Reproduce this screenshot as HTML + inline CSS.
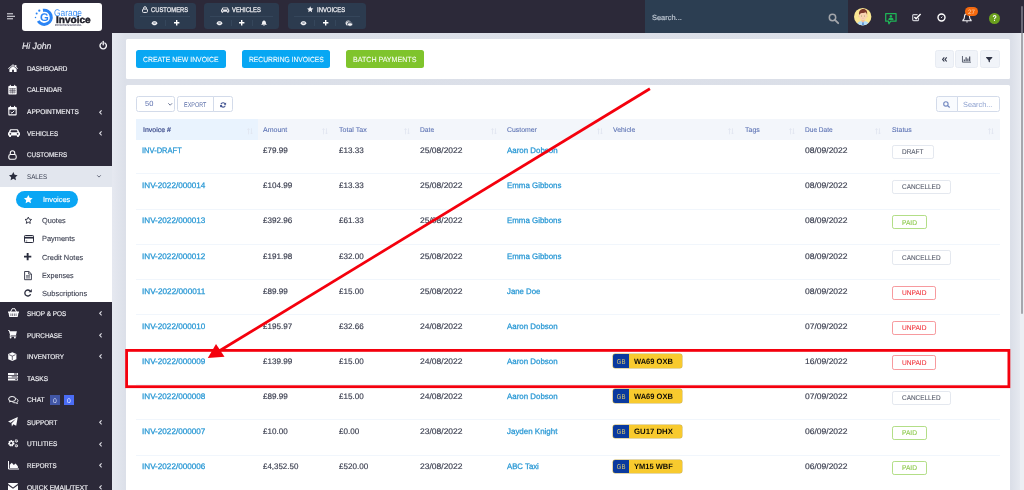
<!DOCTYPE html>
<html lang="en">
<head>
<meta charset="utf-8">
<title>Invoices - Garage Invoice</title>
<style>
*{box-sizing:border-box;margin:0;padding:0}
html,body{width:1024px;height:490px;overflow:hidden}
body{position:relative;background:linear-gradient(to right,#e5e8f0 113px,#dce0e9 125px,#dbdfe8 1011px,#e6e9f0 1020px);--pg:#e2e6ee;font-family:"Liberation Sans",sans-serif;color:#3a3f51;font-size:8px}
.abs{position:absolute}
.t{position:absolute;white-space:nowrap;line-height:12px;height:12px;text-rendering:geometricPrecision}
svg{overflow:visible}
#app{position:absolute;left:0;top:0;width:1024px;height:490px;will-change:transform}
</style>
</head>
<body>
<div id="app">
<div class="abs" style="left:0px;top:0px;width:1024px;height:32.7px;background:#2c2939;"></div>
<svg class="abs" style="left:7px;top:13px" width="8" height="7" viewBox="0 0 8 7"><path d="M0 .8h6M0 3.300h8M0 5.800h6" stroke="#e9e9ee" stroke-width="1"/></svg>
<div class="abs" style="left:22px;top:2.6px;width:80.3px;height:28.4px;background:#fff;border-radius:3px"></div>
<svg class="abs" style="left:35px;top:7px" width="19" height="20" viewBox="0 0 19 20"><path d="M7.98 3.36A7.05 7.05 0 1 1 3.22 14.04" fill="none" stroke="#2a84f5" stroke-width="3.100"/><circle cx="4.300" cy="3.700" r="1.150" fill="#2a84f5"/><circle cx="1.650" cy="6.500" r="1" fill="#2a84f5"/><circle cx=".5" cy="10.400" r=".75" fill="#2a84f5"/></svg>
<div class="t" style="left:39.72px;top:10px;line-height:17px;height:17px;font-size:11.00px;color:#2a84f5;transform:scaleX(1.029);transform-origin:50% 50%;font-weight:bold;">G</div>
<div class="t" style="left:53.80px;top:6px;line-height:16px;height:16px;font-size:9.60px;color:#3b8ff5;transform:scaleX(0.874);transform-origin:0 50%;">Garage</div>
<div class="t" style="left:55.90px;top:13px;line-height:16px;height:16px;font-size:9.80px;color:#1d1d28;transform:scaleX(1.025);transform-origin:0 50%;font-weight:bold;-webkit-text-stroke:0.45px #1d1d28;">Invoice</div>
<div class="t" style="left:54.60px;top:22px;line-height:7px;height:7px;font-size:2.70px;color:#66667a;transform:scaleX(1.285);transform-origin:0 50%;-webkit-text-stroke:0.1px #66667a;">PROFESSIONAL</div>
<div class="abs" style="left:134.3px;top:3.1px;width:61.3px;height:26px;background:#2c3b4f;border-radius:3.500px"></div>
<div class="abs" style="left:203.9px;top:3.1px;width:75.3px;height:26px;background:#2c3b4f;border-radius:3.500px"></div>
<div class="abs" style="left:287.5px;top:3.1px;width:78px;height:26px;background:#2c3b4f;border-radius:3.500px"></div>
<div class="abs" style="left:140.3px;top:16px;width:49.7px;height:0.8px;background:#35465b;"></div>
<div class="abs" style="left:210px;top:16px;width:63px;height:0.8px;background:#35465b;"></div>
<div class="abs" style="left:293.5px;top:16px;width:66.3px;height:0.8px;background:#35465b;"></div>
<div class="abs" style="left:164.8px;top:20.2px;width:0.8px;height:5.4px;background:#35465b;"></div>
<div class="abs" style="left:230.5px;top:20.2px;width:0.8px;height:5.4px;background:#35465b;"></div>
<div class="abs" style="left:251.5px;top:20.2px;width:0.8px;height:5.4px;background:#35465b;"></div>
<div class="abs" style="left:313.9px;top:20.2px;width:0.8px;height:5.4px;background:#35465b;"></div>
<div class="abs" style="left:335.2px;top:20.2px;width:0.8px;height:5.4px;background:#35465b;"></div>
<div class="t" style="left:150.70px;top:5px;line-height:12px;height:12px;font-size:6.80px;color:#ececf0;transform:scaleX(0.859);transform-origin:0 50%;-webkit-text-stroke:0.25px #ececf0;">CUSTOMERS</div>
<div class="t" style="left:232.30px;top:5px;line-height:12px;height:12px;font-size:6.80px;color:#ececf0;transform:scaleX(0.859);transform-origin:0 50%;-webkit-text-stroke:0.25px #ececf0;">VEHICLES</div>
<div class="t" style="left:317.00px;top:5px;line-height:12px;height:12px;font-size:6.80px;color:#ececf0;transform:scaleX(0.868);transform-origin:0 50%;-webkit-text-stroke:0.25px #ececf0;">INVOICES</div>
<svg class="abs" style="left:141.7px;top:5.9px" width="6" height="7" viewBox="0 0 6 7"><rect x=".55" y="3.100" width="4.900" height="3.350" rx=".9" fill="none" stroke="#ececf0" stroke-width="1"/><path d="M1.600 3.100V2.100a1.400 1.400 0 0 1 2.800 0v1" fill="none" stroke="#ececf0" stroke-width="1"/></svg>
<svg class="abs" style="left:221.3px;top:6.7px" width="8.3" height="6.64" viewBox="-0.5 0 12 8.600"><path d="M2.200.2h6.600c.5 0 .8.300 1 .7l.8 2.200c.5.200.9.600.9 1.200v2.200h-1v.8c0 .4-.3.700-.7.700h-.7c-.4 0-.7-.3-.7-.7v-.8H2.600v.8c0 .4-.3.700-.7.700h-.7c-.4 0-.7-.3-.7-.7v-.8h-1V4.300c0-.6.400-1 .9-1.200l.8-2.200c.2-.4.500-.7 1-.7z" fill="#ececf0"/><path d="M2.600 1.300L1.900 3.200h7.200L8.400 1.300z" fill="#2c3b4f"/><circle cx="1.900" cy="4.800" r=".8" fill="#2c3b4f"/><circle cx="9.100" cy="4.800" r=".8" fill="#2c3b4f"/></svg>
<svg class="abs" style="left:307.3px;top:6.4px" width="6.4" height="6.4" viewBox="0 0 10 10"><path d="M5 .2l1.500 3.150 3.400.450-2.500 2.400.65 3.450L5 7.950 1.950 9.650l.65-3.450L.1 3.800l3.400-.450z" fill="#ececf0"/></svg>
<svg class="abs" style="left:150.75px;top:20.9px" width="7" height="4.2" viewBox="0 0 14 9.600"><path d="M0 5C2 1.500 4.500 0 7 0s5 1.500 7 5c-2 3.300-4.500 4.600-7 4.600S2 8.300 0 5z" fill="#f2f2f5"/><circle cx="7" cy="4.300" r="2.300" fill="#5a6678"/><circle cx="7" cy="4.300" r="1.200" fill="#f2f2f5"/></svg>
<svg class="abs" style="left:216.0px;top:20.9px" width="7" height="4.2" viewBox="0 0 14 9.600"><path d="M0 5C2 1.500 4.500 0 7 0s5 1.500 7 5c-2 3.300-4.500 4.600-7 4.600S2 8.300 0 5z" fill="#f2f2f5"/><circle cx="7" cy="4.300" r="2.300" fill="#5a6678"/><circle cx="7" cy="4.300" r="1.200" fill="#f2f2f5"/></svg>
<svg class="abs" style="left:300.0px;top:20.9px" width="7" height="4.2" viewBox="0 0 14 9.600"><path d="M0 5C2 1.500 4.500 0 7 0s5 1.500 7 5c-2 3.300-4.500 4.600-7 4.600S2 8.300 0 5z" fill="#f2f2f5"/><circle cx="7" cy="4.300" r="2.300" fill="#5a6678"/><circle cx="7" cy="4.300" r="1.200" fill="#f2f2f5"/></svg>
<svg class="abs" style="left:173.85000000000002px;top:20.2px" width="5.4" height="5.4" viewBox="0 0 5.4 5.4"><path d="M2.7 0v5.4M0 2.7h5.4" stroke="#fff" stroke-width="1.4"/></svg>
<svg class="abs" style="left:239.05px;top:20.2px" width="5.4" height="5.4" viewBox="0 0 5.4 5.4"><path d="M2.7 0v5.4M0 2.7h5.4" stroke="#fff" stroke-width="1.4"/></svg>
<svg class="abs" style="left:322.90000000000003px;top:20.2px" width="5.4" height="5.4" viewBox="0 0 5.4 5.4"><path d="M2.7 0v5.4M0 2.7h5.4" stroke="#fff" stroke-width="1.4"/></svg>
<svg class="abs" style="left:261px;top:20px" width="6" height="6" viewBox="0 0 14 14"><path d="M7 .3c.7 0 1.100.5 1.100 1.100v.3c2.100.5 3.300 2.300 3.300 4.400 0 2.400.8 3.400 1.900 4.300v.8H.7v-.8c1.100-.9 1.900-1.900 1.900-4.300 0-2.100 1.200-3.900 3.300-4.400v-.3C5.900.8 6.300.3 7 .3zM5.300 12.200h3.400a1.700 1.700 0 0 1-3.400 0z" fill="#f2f2f5"/></svg>
<svg class="abs" style="left:344.7px;top:20px" width="8" height="6" viewBox="0 0 8 6"><path d="M.6 2.500a2.600 1.900 0 0 1 5.200 0v1.200a2.600 1.900 0 0 1-5.200 0z" fill="#f2f2f5"/><path d="M2.400 3.800a2.600 1.700 0 0 1 5.200 0v.8a2.600 1.700 0 0 1-5.200 0z" fill="#f2f2f5" stroke="#2c3b4f" stroke-width=".7"/><path d="M1 2.600a2.200 1.300 0 0 1 4.400 0" fill="none" stroke="#2c3b4f" stroke-width=".5"/><path d="M3 4a2 1.100 0 0 1 4 0" fill="none" stroke="#2c3b4f" stroke-width=".5"/></svg>
<div class="abs" style="left:645px;top:0px;width:203px;height:32.7px;background:#2c3e52;"></div>
<div class="t" style="left:651.90px;top:11px;line-height:13px;height:13px;font-size:7.43px;color:#bcc5d0;transform:scaleX(1.002);transform-origin:0 50%;-webkit-text-stroke:0.2px #bcc5d0;">Search...</div>
<svg class="abs" style="left:828px;top:12.5px" width="12" height="12" viewBox="0 0 12 12"><circle cx="4.500" cy="4.500" r="3.200" fill="none" stroke="#a4a6ab" stroke-width="1.500"/><path d="M6.900 6.900l3.300 3.300" stroke="#a4a6ab" stroke-width="1.800" stroke-linecap="round"/></svg>
<svg class="abs" style="left:854.3px;top:7.7px" width="17.4" height="17.4" viewBox="0 0 18 18"><defs><clipPath id="av"><circle cx="9" cy="9" r="9"/></clipPath></defs><circle cx="9" cy="9" r="9" fill="#fbe793"/><g clip-path="url(#av)"><path d="M2.800 18.500c0-3.300 2.300-5 6.500-5s6.500 1.700 6.500 5z" fill="#b3dcf7"/><path d="M7.700 11.500h3.200v2.300L9.300 15.300 7.700 13.800z" fill="#f0bd96"/><ellipse cx="5.300" cy="8.500" rx=".8" ry="1.100" fill="#f3c4a0"/><ellipse cx="13.300" cy="8.500" rx=".8" ry="1.100" fill="#f3c4a0"/><ellipse cx="9.300" cy="8.100" rx="3.900" ry="4.500" fill="#f9d2b2"/><path d="M5.300 7.600C4.600 3.600 6.500 1.100 9.600 1.100c3 0 4.700 2.200 3.900 6.200-.3-1.400-.8-2.300-1.500-2.800-1.500 1-3.700.7-5.300 1.100-.8.300-1.200 1-1.400 2z" fill="#7c3a2c"/><circle cx="7.700" cy="8.300" r=".5" fill="#6b8f3a"/><circle cx="10.900" cy="8.300" r=".5" fill="#6b8f3a"/><path d="M8.800 10.700h1" stroke="#d9957a" stroke-width=".4"/><path d="M8.800 14.800h1l.4 3.500H8.400z" fill="#3f78c8"/></g></svg>
<svg class="abs" style="left:885.3px;top:12.9px" width="11.8" height="11.8" viewBox="0 0 11.8 11.8"><path d="M.7.750h10.350v7.500H5.600L3.900 10.800 3.500 8.250H.7z" fill="none" stroke="#1fb457" stroke-width="1.250" stroke-linejoin="round"/><circle cx="5.900" cy="3.200" r="1.200" fill="#1fb457"/><path d="M3.300 6.900c0-1.700 1.100-2.400 2.600-2.400s2.600.7 2.600 2.400z" fill="#1fb457"/></svg>
<svg class="abs" style="left:912.2px;top:12.8px" width="9.5" height="8.5" viewBox="0 0 9.5 8.5"><path d="M6.500 4.700v2.100c0 .5-.4.900-.9.900H1.600c-.5 0-.9-.4-.9-.9V2.500c0-.5.400-.9.900-.9h4" fill="none" stroke="#c9c9d0" stroke-width="1.200"/><path d="M2.400 4l1.700 1.700L8.600 1.100" fill="none" stroke="#fff" stroke-width="1.500"/></svg>
<svg class="abs" style="left:937.3px;top:13.2px" width="9" height="9" viewBox="0 0 9 9"><circle cx="4.500" cy="4.500" r="3.500" fill="none" stroke="#fff" stroke-width="1.400"/><path d="M4.100 5l1.200-1.400" stroke="#e0e0e6" stroke-width="1"/></svg>
<svg class="abs" style="left:961.5px;top:13.3px" width="10" height="10" viewBox="0 0 10 10"><path d="M5 .7c1.600 0 2.500 1.200 2.500 2.900 0 2 .6 2.900 1.600 3.700v.5H.9v-.5c1-.8 1.600-1.700 1.600-3.700C2.500 1.900 3.400.7 5 .7z" fill="none" stroke="#f4f4f7" stroke-width="1.100"/><path d="M4 8.600a1 1 0 0 0 2 0z" fill="#f4f4f7"/></svg>
<div class="abs" style="left:965.4px;top:7.1px;width:12.9px;height:8.9px;background:#f5690f;border-radius:4.500px"></div>
<div class="t" style="left:968.35px;top:7px;line-height:12px;height:12px;font-size:6.30px;color:#ffd6b0;transform:scaleX(1.011);transform-origin:50% 50%;">27</div>
<div class="abs" style="left:989.1px;top:12.5px;width:11px;height:11px;background:#6a9f1e;border-radius:50%"></div>
<div class="t" style="left:992.00px;top:11px;line-height:14px;height:14px;font-size:8.50px;color:#fff;transform:scaleX(0.815);transform-origin:50% 50%;font-weight:bold;">?</div>
<div class="abs" style="left:0px;top:32.7px;width:111.7px;height:460px;background:#2c2939;"></div>
<div class="t" style="left:22.00px;top:39px;line-height:14px;height:14px;font-size:9.00px;color:#ececf0;transform:scaleX(0.963);transform-origin:0 50%;font-style:italic;-webkit-text-stroke:0.15px #ececf0;">Hi John</div>
<svg class="abs" style="left:98.7px;top:41.4px" width="8.4" height="8.4" viewBox="0 0 8.4 8.4"><path d="M2.500 2a3.200 3.200 0 1 0 3.400 0" fill="none" stroke="#f4f4f7" stroke-width="1.400" stroke-linecap="round"/><path d="M4.200.4v3.400" stroke="#f4f4f7" stroke-width="1.400" stroke-linecap="round"/></svg>
<div class="abs" style="left:0px;top:166px;width:111.7px;height:21px;background:#e2e6ee;"></div>
<div class="abs" style="left:0px;top:186.9px;width:111.7px;height:115.1px;background:#fff;"></div>
<div class="abs" style="left:15.9px;top:191px;width:62.2px;height:16.5px;background:#0aa6f4;border-radius:8.500px"></div>
<svg class="abs" style="left:7.5px;top:63.7px" width="10" height="8" viewBox="0 0 10 8"><path d="M5 .2L0 4.400l.5.600L5 1.300l4.500 3.700.5-.6-1.600-1.400V.9H7.100v1z" fill="#fbfbfd"/><path d="M5 2L1.400 5v2.700c0 .2.100.3.300.3h2.400V5.700h1.800V8h2.400c.2 0 .3-.1.300-.3V5z" fill="#fbfbfd"/></svg>
<div class="t" style="left:26.90px;top:64px;line-height:12px;height:12px;font-size:6.86px;color:#f1f1f5;transform:scaleX(0.928);transform-origin:0 50%;-webkit-text-stroke:0.15px #f1f1f5;">DASHBOARD</div>
<svg class="abs" style="left:8.0px;top:85.1px" width="9" height="9.5" viewBox="0 0 9 9.5"><path d="M.3 1.800c0-.4.300-.7.700-.7h7c.4 0 .7.300.7.700v6.900c0 .4-.3.700-.7.700H1c-.4 0-.7-.3-.7-.7z" fill="#fbfbfd"/><path d="M2.300.2v1.900M6.700.2v1.900" stroke="#fbfbfd" stroke-width="1.100" stroke-linecap="round"/><path d="M1.100 3.700h6.800M1.100 5.400h6.800M1.100 7.100h6.800M2.900 3.200v5.400M4.500 3.200v5.400M6.100 3.200v5.400" stroke="#2c2939" stroke-width=".5"/></svg>
<div class="t" style="left:26.90px;top:85px;line-height:12px;height:12px;font-size:6.86px;color:#f1f1f5;transform:scaleX(0.930);transform-origin:0 50%;-webkit-text-stroke:0.15px #f1f1f5;">CALENDAR</div>
<svg class="abs" style="left:8.4px;top:106.35px" width="9" height="9.5" viewBox="0 0 9 9.5"><path d="M.85 2c0-.2.150-.350.350-.350h6.600c.2 0 .350.150.350.350v6.500c0 .2-.150.350-.350.350H1.200c-.2 0-.350-.150-.350-.350z" fill="none" stroke="#fbfbfd" stroke-width="1.100"/><path d="M.5 1.600h8v2h-8z" fill="#fbfbfd"/><path d="M2.400.2v1.900M6.600.2v1.900" stroke="#fbfbfd" stroke-width="1.100" stroke-linecap="round"/><path d="M2.700 6l1.200 1.200 2.400-2.500" fill="none" stroke="#fbfbfd" stroke-width="1"/></svg>
<div class="t" style="left:26.90px;top:107px;line-height:12px;height:12px;font-size:6.86px;color:#f1f1f5;transform:scaleX(0.958);transform-origin:0 50%;-webkit-text-stroke:0.15px #f1f1f5;">APPOINTMENTS</div>
<svg class="abs" style="left:98.6px;top:109.5px" width="3" height="4.6" viewBox="0 0 3 4.6"><path d="M2.600.3L.7 2.300l1.900 2" fill="none" stroke="#dcdce3" stroke-width="1.100"/></svg>
<svg class="abs" style="left:7.85px;top:129.35px" width="11.5" height="8.5" viewBox="0 0 11.5 8.5"><path d="M2.200.2h6.600c.5 0 .8.300 1 .7l.8 2.200c.5.200.9.600.9 1.200v2.200h-1v.8c0 .4-.3.700-.7.700h-.7c-.4 0-.7-.3-.7-.7v-.8H2.600v.8c0 .4-.3.700-.7.700h-.7c-.4 0-.7-.3-.7-.7v-.8h-1V4.300c0-.6.400-1 .9-1.200l.8-2.200c.2-.4.500-.7 1-.7z" fill="#fbfbfd" transform="translate(.5 0)"/><path d="M3.100 1.300L2.400 3.200h7.200L8.900 1.300z" fill="#2c2939"/><circle cx="2.400" cy="4.800" r=".85" fill="#2c2939"/><circle cx="9.600" cy="4.800" r=".85" fill="#2c2939"/></svg>
<div class="t" style="left:26.90px;top:129px;line-height:12px;height:12px;font-size:6.86px;color:#f1f1f5;transform:scaleX(0.923);transform-origin:0 50%;-webkit-text-stroke:0.15px #f1f1f5;">VEHICLES</div>
<svg class="abs" style="left:98.6px;top:131.1px" width="3" height="4.6" viewBox="0 0 3 4.6"><path d="M2.600.3L.7 2.300l1.900 2" fill="none" stroke="#dcdce3" stroke-width="1.100"/></svg>
<svg class="abs" style="left:8.0px;top:149.7px" width="9" height="10" viewBox="0 0 9 10"><rect x=".8" y="4.500" width="7.400" height="4.800" rx="1.800" fill="none" stroke="#fbfbfd" stroke-width="1.100"/><path d="M2.300 4.500V3a2.200 2.200 0 0 1 4.400 0v1.500" fill="none" stroke="#fbfbfd" stroke-width="1.100"/></svg>
<div class="t" style="left:26.90px;top:150px;line-height:12px;height:12px;font-size:6.86px;color:#f1f1f5;transform:scaleX(0.922);transform-origin:0 50%;-webkit-text-stroke:0.15px #f1f1f5;">CUSTOMERS</div>
<svg class="abs" style="left:9.0px;top:172.35px" width="8.6" height="8.2" viewBox="0 0 8.6 8.2"><path d="M4.300 0l1.330 2.750 3 .4-2.200 2.100.55 3-2.680-1.500-2.680 1.500.55-3-2.200-2.100 3-.4z" fill="#2a2d3e"/></svg>
<div class="t" style="left:26.90px;top:172px;line-height:12px;height:12px;font-size:6.86px;color:#3a3f51;transform:scaleX(0.914);transform-origin:0 50%;">SALES</div>
<svg class="abs" style="left:97.1px;top:175.45px" width="4" height="2.6" viewBox="0 0 4 2.6"><path d="M.2.300L2 2.100 3.800.3" fill="none" stroke="#4a4f63" stroke-width=".8"/></svg>
<svg class="abs" style="left:8.1px;top:308.25px" width="11" height="9" viewBox="0 0 11 9"><path d="M0 3.400h11v1.300h-.5L9.700 9H1.300L.5 4.700H0z" fill="#fbfbfd"/><path d="M2.500 4L4.200.7M8.500 4L6.800.7" stroke="#fbfbfd" stroke-width="1"/><path d="M4 .7h3" stroke="#fbfbfd" stroke-width=".9"/><path d="M2.900 5.500v2.500M4.600 5.500v2.500M6.400 5.500v2.500M8.100 5.500v2.500" stroke="#2c2939" stroke-width=".6"/></svg>
<div class="t" style="left:26.90px;top:309px;line-height:12px;height:12px;font-size:6.86px;color:#f1f1f5;transform:scaleX(0.929);transform-origin:0 50%;-webkit-text-stroke:0.15px #f1f1f5;">SHOP &amp; POS</div>
<svg class="abs" style="left:98.6px;top:311.15px" width="3" height="4.6" viewBox="0 0 3 4.6"><path d="M2.600.3L.7 2.300l1.900 2" fill="none" stroke="#dcdce3" stroke-width="1.100"/></svg>
<svg class="abs" style="left:8.4px;top:330.45px" width="9" height="8.5" viewBox="0 0 9 8.5"><path d="M0 .2h1.700l.4 1.100h6.800L8 4.900H2.800l-.2.700h5.700v.9H1.500l.5-1.700L.9 1.100H0z" fill="#fbfbfd"/><circle cx="2.600" cy="7.500" r=".9" fill="#fbfbfd"/><circle cx="6.900" cy="7.500" r=".9" fill="#fbfbfd"/></svg>
<div class="t" style="left:26.90px;top:331px;line-height:12px;height:12px;font-size:6.86px;color:#f1f1f5;transform:scaleX(0.923);transform-origin:0 50%;-webkit-text-stroke:0.15px #f1f1f5;">PURCHASE</div>
<svg class="abs" style="left:98.6px;top:333.0px" width="3" height="4.6" viewBox="0 0 3 4.6"><path d="M2.600.3L.7 2.300l1.900 2" fill="none" stroke="#dcdce3" stroke-width="1.100"/></svg>
<svg class="abs" style="left:8.4px;top:351.7px" width="8.6" height="9.2" viewBox="0 0 8.6 9.2"><path d="M4.300.2L8.400 1.900v5.300L4.300 9 .2 7.200V1.900z" fill="#fbfbfd"/><path d="M1.100 2.700l3.200 1.400 3.200-1.400M4.300 4.100v4" fill="none" stroke="#2c2939" stroke-width=".7"/></svg>
<div class="t" style="left:26.90px;top:352px;line-height:12px;height:12px;font-size:6.86px;color:#f1f1f5;transform:scaleX(0.931);transform-origin:0 50%;-webkit-text-stroke:0.15px #f1f1f5;">INVENTORY</div>
<svg class="abs" style="left:98.6px;top:354.4px" width="3" height="4.6" viewBox="0 0 3 4.6"><path d="M2.600.3L.7 2.300l1.900 2" fill="none" stroke="#dcdce3" stroke-width="1.100"/></svg>
<svg class="abs" style="left:8.2px;top:373.3px" width="10" height="7.6" viewBox="0 0 10 7.6"><path d="M0 0h10v2H0zM0 2.800h10v2H0zM0 5.600h10v2H0z" fill="#fbfbfd"/><path d="M6 .6h3.200v.8H6zM3.700 3.400h5.500v.8H3.700zM7.200 6.200h2v.8h-2z" fill="#2c2939"/></svg>
<div class="t" style="left:26.90px;top:374px;line-height:12px;height:12px;font-size:6.86px;color:#f1f1f5;transform:scaleX(0.958);transform-origin:0 50%;-webkit-text-stroke:0.15px #f1f1f5;">TASKS</div>
<svg class="abs" style="left:7.6px;top:396.05px" width="10.4" height="7.6" viewBox="0 0 10.4 7.6"><ellipse cx="4.100" cy="3" rx="3.500" ry="2.500" fill="none" stroke="#fbfbfd" stroke-width="1"/><path d="M1.700 4.800L.9 6.600l2.500-1.100z" fill="#fbfbfd"/><path d="M8.300 2.700c1.100.4 1.700 1.200 1.700 2 0 .7-.4 1.300-1.100 1.700l.6 1.100-1.900-.7c-1.400.2-2.700-.2-3.300-.9" fill="none" stroke="#fbfbfd" stroke-width=".9"/></svg>
<div class="t" style="left:26.90px;top:395px;line-height:12px;height:12px;font-size:6.86px;color:#f1f1f5;transform:scaleX(0.975);transform-origin:0 50%;-webkit-text-stroke:0.15px #f1f1f5;">CHAT</div>
<svg class="abs" style="left:8.4px;top:416.75px" width="9.8" height="9.5" viewBox="0 0 9.8 9.5"><path d="M9.800 0L8.200 8.700 5.300 7.300 3.900 9.500l-.4-3L8 1.700 2.600 5.800 0 4.600z" fill="#fbfbfd"/></svg>
<div class="t" style="left:26.90px;top:418px;line-height:12px;height:12px;font-size:6.86px;color:#f1f1f5;transform:scaleX(0.920);transform-origin:0 50%;-webkit-text-stroke:0.15px #f1f1f5;">SUPPORT</div>
<svg class="abs" style="left:98.6px;top:420.1px" width="3" height="4.6" viewBox="0 0 3 4.6"><path d="M2.600.3L.7 2.300l1.900 2" fill="none" stroke="#dcdce3" stroke-width="1.100"/></svg>
<svg class="abs" style="left:8.4px;top:438.9px" width="10.2" height="8.6" viewBox="0 0 10.2 8.6"><circle cx="3.300" cy="4.300" r="2.250" fill="none" stroke="#fbfbfd" stroke-width="1.900" stroke-dasharray="1.200 .57"/><circle cx="3.300" cy="4.300" r="1.850" fill="none" stroke="#fbfbfd" stroke-width="1.100"/><circle cx="8.400" cy="1.900" r="1.050" fill="none" stroke="#fbfbfd" stroke-width="1.200" stroke-dasharray=".8 .3"/><circle cx="8.400" cy="6.700" r="1.050" fill="none" stroke="#fbfbfd" stroke-width="1.200" stroke-dasharray=".8 .3"/></svg>
<div class="t" style="left:26.90px;top:439px;line-height:12px;height:12px;font-size:6.86px;color:#f1f1f5;transform:scaleX(0.947);transform-origin:0 50%;-webkit-text-stroke:0.15px #f1f1f5;">UTILITIES</div>
<svg class="abs" style="left:98.6px;top:441.8px" width="3" height="4.6" viewBox="0 0 3 4.6"><path d="M2.600.3L.7 2.300l1.900 2" fill="none" stroke="#dcdce3" stroke-width="1.100"/></svg>
<svg class="abs" style="left:8.0px;top:461.35px" width="11" height="8.5" viewBox="0 0 11 8.5"><path d="M.5 0v8H11" fill="none" stroke="#fbfbfd" stroke-width="1"/><path d="M1.800 7V3.800l2-2.100 2 2.200 1.800-1.400 2.300 2.700V7z" fill="#fbfbfd"/></svg>
<div class="t" style="left:26.90px;top:461px;line-height:12px;height:12px;font-size:6.86px;color:#f1f1f5;transform:scaleX(0.898);transform-origin:0 50%;-webkit-text-stroke:0.15px #f1f1f5;">REPORTS</div>
<svg class="abs" style="left:98.6px;top:463.4px" width="3" height="4.6" viewBox="0 0 3 4.6"><path d="M2.600.3L.7 2.300l1.900 2" fill="none" stroke="#dcdce3" stroke-width="1.100"/></svg>
<svg class="abs" style="left:8.1px;top:482.8px" width="10" height="8" viewBox="0 0 10 8"><path d="M0 .8C0 .4.400 0 .8 0h8.400c.4 0 .8.400.8.800L5 4.400z" fill="#fbfbfd"/><path d="M0 2.200l5 3.500 5-3.500v5c0 .4-.4.800-.8.800H.8C.4 8 0 7.600 0 7.200z" fill="#fbfbfd"/></svg>
<div class="t" style="left:26.90px;top:483px;line-height:12px;height:12px;font-size:6.86px;color:#f1f1f5;transform:scaleX(0.959);transform-origin:0 50%;-webkit-text-stroke:0.15px #f1f1f5;">QUICK EMAIL/TEXT</div>
<svg class="abs" style="left:98.6px;top:485.1px" width="3" height="4.6" viewBox="0 0 3 4.6"><path d="M2.600.3L.7 2.300l1.900 2" fill="none" stroke="#dcdce3" stroke-width="1.100"/></svg>
<svg class="abs" style="left:24.0px;top:194.7px" width="8.6" height="8.2" viewBox="0 0 8.6 8.2"><path d="M4.300 0l1.330 2.750 3 .4-2.200 2.100.55 3-2.680-1.500-2.680 1.500.55-3-2.200-2.100 3-.4z" fill="#fff"/></svg>
<div class="t" style="left:42.50px;top:193px;line-height:13px;height:13px;font-size:7.43px;color:#fff;transform:scaleX(1.004);transform-origin:0 50%;-webkit-text-stroke:0.15px #fff;">Invoices</div>
<svg class="abs" style="left:24.0px;top:216.2px" width="8.6" height="8.2" viewBox="0 0 8.6 8.2"><path d="M4.300 1.100l1 2.100 2.300.3-1.700 1.600.4 2.300-2-1.150-2 1.150.4-2.300L1 3.500l2.300-.3z" fill="none" stroke="#2a2d3e" stroke-width=".9" stroke-linejoin="round"/></svg>
<div class="t" style="left:42.40px;top:214px;line-height:13px;height:13px;font-size:7.43px;color:#393d4e;transform:scaleX(0.987);transform-origin:0 50%;-webkit-text-stroke:0.1px #393d4e;">Quotes</div>
<svg class="abs" style="left:23.9px;top:234.75px" width="10" height="8" viewBox="0 0 10 8"><rect x=".5" y=".5" width="9" height="7" rx=".8" fill="none" stroke="#2a2d3e" stroke-width="1"/><path d="M.5 2.700h9" stroke="#2a2d3e" stroke-width="1.700"/><path d="M1.700 6h1.500" stroke="#2a2d3e" stroke-width=".7"/></svg>
<div class="t" style="left:42.40px;top:232px;line-height:13px;height:13px;font-size:7.43px;color:#393d4e;transform:scaleX(0.998);transform-origin:0 50%;-webkit-text-stroke:0.1px #393d4e;">Payments</div>
<svg class="abs" style="left:24.0px;top:253.35px" width="7.3" height="7.3" viewBox="0 0 7.3 7.3"><path d="M3.650 0v7.300M0 3.650h7.300" stroke="#2a2d3e" stroke-width="1.900"/></svg>
<div class="t" style="left:42.40px;top:251px;line-height:13px;height:13px;font-size:7.43px;color:#393d4e;transform:scaleX(0.999);transform-origin:0 50%;-webkit-text-stroke:0.1px #393d4e;">Credit Notes</div>
<svg class="abs" style="left:23.95px;top:270.5px" width="8" height="9.2" viewBox="0 0 8 9.2"><path d="M.6.500h4.300l2.500 2.400v5.800H.6z" fill="none" stroke="#2a2d3e" stroke-width=".9"/><path d="M4.700.6v2.500h2.600" fill="none" stroke="#2a2d3e" stroke-width=".8"/><path d="M2 4.600h4M2 5.800h4M2 7h4" stroke="#2a2d3e" stroke-width=".6"/></svg>
<div class="t" style="left:42.40px;top:269px;line-height:13px;height:13px;font-size:7.43px;color:#393d4e;transform:scaleX(0.973);transform-origin:0 50%;-webkit-text-stroke:0.1px #393d4e;">Expenses</div>
<svg class="abs" style="left:23.95px;top:289.3px" width="8" height="8" viewBox="0 0 8 8"><path d="M6.600 5.200A3 3 0 1 1 6 1.900" fill="none" stroke="#2a2d3e" stroke-width="1.300"/><path d="M7.800 0v3.300H4.500z" fill="#2a2d3e"/></svg>
<div class="t" style="left:42.40px;top:287px;line-height:13px;height:13px;font-size:7.43px;color:#393d4e;transform:scaleX(1.016);transform-origin:0 50%;-webkit-text-stroke:0.1px #393d4e;">Subscriptions</div>
<div class="abs" style="left:49.9px;top:395.2px;width:9.9px;height:9.8px;background:#4156a6;"></div>
<div class="abs" style="left:64px;top:395.2px;width:10px;height:9.8px;background:#4a6cf5;"></div>
<div class="t" style="left:52.97px;top:396px;line-height:12px;height:12px;font-size:6.75px;color:#d5dbf5;transform:scaleX(1.011);transform-origin:50% 50%;">0</div>
<div class="t" style="left:67.12px;top:396px;line-height:12px;height:12px;font-size:6.75px;color:#e4e9ff;transform:scaleX(1.011);transform-origin:50% 50%;">0</div>
<div class="abs" style="left:126.3px;top:39.1px;width:883.6px;height:40px;background:#fff;border-radius:1.500px"></div>
<div class="abs" style="left:126.3px;top:85.4px;width:883.6px;height:410px;background:#fff;border-radius:1.500px"></div>
<div class="abs" style="left:136.4px;top:50px;width:89.2px;height:18.2px;background:#08a7f3;border-radius:2.500px"></div>
<div class="abs" style="left:241.7px;top:50px;width:88.4px;height:18.2px;background:#08a7f3;border-radius:2.500px"></div>
<div class="abs" style="left:346px;top:50px;width:77.5px;height:18.2px;background:#7fc42c;border-radius:2.500px"></div>
<div class="t" style="left:143.40px;top:53px;line-height:13px;height:13px;font-size:7.40px;color:#f3fbff;transform:scaleX(0.930);transform-origin:0 50%;-webkit-text-stroke:0.1px #f3fbff;">CREATE NEW INVOICE</div>
<div class="t" style="left:248.60px;top:53px;line-height:13px;height:13px;font-size:7.40px;color:#f3fbff;transform:scaleX(0.910);transform-origin:0 50%;-webkit-text-stroke:0.1px #f3fbff;">RECURRING INVOICES</div>
<div class="t" style="left:353.00px;top:53px;line-height:13px;height:13px;font-size:7.40px;color:#f6fbef;transform:scaleX(0.959);transform-origin:0 50%;-webkit-text-stroke:0.1px #f6fbef;">BATCH PAYMENTS</div>
<div class="abs" style="left:935.400px;top:50px;width:18.200px;height:18px;background:#f1f4f9;border:1px solid #e8ecf3;border-radius:2.500px"></div>
<div class="abs" style="left:955.100px;top:50px;width:22.800px;height:18px;background:#f1f4f9;border:1px solid #e8ecf3;border-radius:2.500px"></div>
<div class="abs" style="left:979.500px;top:50px;width:20.100px;height:18px;background:#f1f4f9;border:1px solid #e8ecf3;border-radius:2.500px"></div>
<svg class="abs" style="left:942px;top:57px" width="5.2" height="4.8" viewBox="0 0 5.2 4.8"><path d="M2.300.3L.6 2.400l1.700 2.100M4.700.3L3 2.400l1.700 2.100" fill="none" stroke="#343a4c" stroke-width="1.150"/></svg>
<svg class="abs" style="left:962px;top:56px" width="9" height="6.6" viewBox="0 0 9 6.6"><path d="M.45 0v6.150H9" fill="none" stroke="#3b4153" stroke-width=".8"/><path d="M2.300 5.300V3.400M4.100 5.300V1.200M5.900 5.300V2.500M7.700 5.300V.6" stroke="#3b4153" stroke-width="1.100"/></svg>
<svg class="abs" style="left:986.2px;top:56.6px" width="6.4" height="5.6" viewBox="0 0 6.4 5.6"><path d="M.1.100h6.200v.7L3.900 3.200V5.500L2.500 4.600V3.200L.1.800z" fill="#2f3446"/></svg>
<div class="abs" style="left:136.400px;top:96.200px;width:38.400px;height:15.400px;border:1px solid #d3dbea;background:#fff;border-radius:2.500px"></div>
<div class="t" style="left:144.70px;top:97px;line-height:13px;height:13px;font-size:7.43px;color:#5b6fae;transform:scaleX(1.011);transform-origin:0 50%;">50</div>
<svg class="abs" style="left:167.6px;top:102.7px" width="4.4" height="2.7" viewBox="0 0 4.4 2.7"><path d="M.3.300l1.900 1.900L4.100.3" fill="none" stroke="#47537a" stroke-width=".8"/></svg>
<div class="abs" style="left:177.400px;top:96.200px;width:36.600px;height:16.100px;border:1px solid #d3dbea;background:#fff;border-radius:2.500px 0 0 2.500px"></div>
<div class="abs" style="left:213px;top:96.200px;width:19.600px;height:16.100px;border:1px solid #d3dbea;background:#fff;border-radius:0 2.500px 2.500px 0"></div>
<div class="t" style="left:184.40px;top:100px;line-height:12px;height:12px;font-size:6.75px;color:#5a6ea8;transform:scaleX(0.807);transform-origin:0 50%;">EXPORT</div>
<svg class="abs" style="left:220px;top:101.5px" width="6.2" height="5.9" viewBox="0 0 6.2 5.9"><path d="M5.300 2.300A2.350 2.350 0 0 0 .9 2.200M.9 3.700A2.350 2.350 0 0 0 5.300 3.600" fill="none" stroke="#3d4f8e" stroke-width="1.100"/><path d="M6.100.5v2.300H3.800zM.1 5.400V3.100h2.300z" fill="#3d4f8e"/></svg>
<div class="abs" style="left:936.300px;top:96.200px;width:21.500px;height:16.100px;border:1px solid #d3dbea;background:#f9fbfe;border-radius:2.500px 0 0 2.500px"></div>
<div class="abs" style="left:956.800px;top:96.200px;width:43px;height:16.100px;border:1px solid #d3dbea;background:#fff;border-radius:0 2.500px 2.500px 0"></div>
<svg class="abs" style="left:943.4px;top:101.2px" width="7.2" height="6.8" viewBox="0 0 7.2 6.8"><circle cx="2.900" cy="2.900" r="2.200" fill="none" stroke="#7187c0" stroke-width="1.100"/><path d="M4.600 4.600l2.100 2" stroke="#7187c0" stroke-width="1.300"/></svg>
<div class="t" style="left:962.80px;top:98px;line-height:13px;height:13px;font-size:7.43px;color:#8ea1cf;transform:scaleX(0.989);transform-origin:0 50%;">Search...</div>
<div class="abs" style="left:136.4px;top:119.4px;width:863.3px;height:20.2px;background:#f3f6fb;"></div>
<div class="abs" style="left:136.4px;top:119.4px;width:121.3px;height:20.2px;background:#e9f3fe;"></div>
<div class="t" style="left:142.90px;top:125px;line-height:12px;height:12px;font-size:6.86px;color:#40508f;transform:scaleX(1.014);transform-origin:0 50%;-webkit-text-stroke:0.2px #40508f;">Invoice #</div>
<div class="t" style="left:263.00px;top:125px;line-height:12px;height:12px;font-size:6.86px;color:#5a70b2;transform:scaleX(1.024);transform-origin:0 50%;-webkit-text-stroke:0.08px #5a70b2;">Amount</div>
<div class="t" style="left:338.70px;top:125px;line-height:12px;height:12px;font-size:6.86px;color:#5a70b2;transform:scaleX(1.029);transform-origin:0 50%;-webkit-text-stroke:0.08px #5a70b2;">Total Tax</div>
<div class="t" style="left:420.30px;top:125px;line-height:12px;height:12px;font-size:6.86px;color:#5a70b2;transform:scaleX(0.974);transform-origin:0 50%;-webkit-text-stroke:0.08px #5a70b2;">Date</div>
<div class="t" style="left:507.00px;top:125px;line-height:12px;height:12px;font-size:6.86px;color:#5a70b2;transform:scaleX(1.004);transform-origin:0 50%;-webkit-text-stroke:0.08px #5a70b2;">Customer</div>
<div class="t" style="left:613.20px;top:125px;line-height:12px;height:12px;font-size:6.86px;color:#5a70b2;transform:scaleX(1.004);transform-origin:0 50%;-webkit-text-stroke:0.08px #5a70b2;">Vehicle</div>
<div class="t" style="left:745.00px;top:125px;line-height:12px;height:12px;font-size:6.86px;color:#5a70b2;transform:scaleX(1.024);transform-origin:0 50%;-webkit-text-stroke:0.08px #5a70b2;">Tags</div>
<div class="t" style="left:805.00px;top:125px;line-height:12px;height:12px;font-size:6.86px;color:#5a70b2;transform:scaleX(0.957);transform-origin:0 50%;-webkit-text-stroke:0.08px #5a70b2;">Due Date</div>
<div class="t" style="left:891.70px;top:125px;line-height:12px;height:12px;font-size:6.86px;color:#5a70b2;transform:scaleX(1.009);transform-origin:0 50%;-webkit-text-stroke:0.08px #5a70b2;">Status</div>
<svg class="abs" style="left:247px;top:127.8px" width="6" height="6.6" viewBox="0 0 6 6.6"><path d="M1.500 6.300V.7M.4 1.800L1.500.6l1.100 1.200M4.500.3v5.600M3.400 4.800l1.100 1.200 1.100-1.200" fill="none" stroke="#dfe5f0" stroke-width=".8"/></svg>
<svg class="abs" style="left:322.2px;top:127.8px" width="6" height="6.6" viewBox="0 0 6 6.6"><path d="M1.500 6.300V.7M.4 1.800L1.500.6l1.100 1.200M4.500.3v5.600M3.400 4.800l1.100 1.200 1.100-1.200" fill="none" stroke="#dfe5f0" stroke-width=".8"/></svg>
<svg class="abs" style="left:403.8px;top:127.8px" width="6" height="6.6" viewBox="0 0 6 6.6"><path d="M1.500 6.300V.7M.4 1.800L1.500.6l1.100 1.200M4.500.3v5.600M3.400 4.800l1.100 1.200 1.100-1.200" fill="none" stroke="#dfe5f0" stroke-width=".8"/></svg>
<svg class="abs" style="left:490.7px;top:127.8px" width="6" height="6.6" viewBox="0 0 6 6.6"><path d="M1.500 6.300V.7M.4 1.800L1.500.6l1.100 1.200M4.500.3v5.600M3.400 4.800l1.100 1.200 1.100-1.200" fill="none" stroke="#dfe5f0" stroke-width=".8"/></svg>
<svg class="abs" style="left:596.8px;top:127.8px" width="6" height="6.6" viewBox="0 0 6 6.6"><path d="M1.500 6.300V.7M.4 1.800L1.500.6l1.100 1.200M4.500.3v5.600M3.400 4.800l1.100 1.200 1.100-1.200" fill="none" stroke="#dfe5f0" stroke-width=".8"/></svg>
<svg class="abs" style="left:728.4px;top:127.8px" width="6" height="6.6" viewBox="0 0 6 6.6"><path d="M1.500 6.300V.7M.4 1.800L1.500.6l1.100 1.200M4.500.3v5.600M3.400 4.800l1.100 1.200 1.100-1.200" fill="none" stroke="#dfe5f0" stroke-width=".8"/></svg>
<svg class="abs" style="left:788.5px;top:127.8px" width="6" height="6.6" viewBox="0 0 6 6.6"><path d="M1.500 6.300V.7M.4 1.800L1.500.6l1.100 1.200M4.500.3v5.600M3.400 4.800l1.100 1.200 1.100-1.200" fill="none" stroke="#dfe5f0" stroke-width=".8"/></svg>
<svg class="abs" style="left:875.3px;top:127.8px" width="6" height="6.6" viewBox="0 0 6 6.6"><path d="M1.500 6.300V.7M.4 1.800L1.500.6l1.100 1.200M4.500.3v5.600M3.400 4.800l1.100 1.200 1.100-1.200" fill="none" stroke="#dfe5f0" stroke-width=".8"/></svg>
<svg class="abs" style="left:988.2px;top:127.8px" width="6" height="6.6" viewBox="0 0 6 6.6"><path d="M1.500 6.300V.7M.4 1.800L1.500.6l1.100 1.200M4.500.3v5.600M3.400 4.800l1.100 1.200 1.100-1.200" fill="none" stroke="#dfe5f0" stroke-width=".8"/></svg>
<div class="t" style="left:142.30px;top:144px;line-height:13px;height:13px;font-size:8.00px;color:#2797d4;transform:scaleX(0.941);transform-origin:0 50%;-webkit-text-stroke:0.25px #2797d4;">INV-DRAFT</div>
<div class="t" style="left:263.00px;top:144px;line-height:13px;height:13px;font-size:8.00px;color:#3a3e4f;transform:scaleX(1.011);transform-origin:0 50%;-webkit-text-stroke:0.16px #3a3e4f;">£79.99</div>
<div class="t" style="left:338.70px;top:144px;line-height:13px;height:13px;font-size:8.00px;color:#3a3e4f;transform:scaleX(1.011);transform-origin:0 50%;-webkit-text-stroke:0.16px #3a3e4f;">£13.33</div>
<div class="t" style="left:420.20px;top:144px;line-height:13px;height:13px;font-size:8.00px;color:#3a3e4f;transform:scaleX(1.063);transform-origin:0 50%;-webkit-text-stroke:0.16px #3a3e4f;">25/08/2022</div>
<div class="t" style="left:507.00px;top:144px;line-height:13px;height:13px;font-size:8.00px;color:#2797d4;transform:scaleX(0.989);transform-origin:0 50%;-webkit-text-stroke:0.25px #2797d4;">Aaron Dobson</div>
<div class="t" style="left:805.00px;top:144px;line-height:13px;height:13px;font-size:8.00px;color:#3a3e4f;transform:scaleX(1.063);transform-origin:0 50%;-webkit-text-stroke:0.16px #3a3e4f;">08/09/2022</div>
<div class="abs" style="left:891.900px;top:144.70px;width:42.0px;height:14.400px;border:1px solid #e4e8ef;border-radius:2.200px;background:#fff"></div>
<div class="t" style="left:901.80px;top:147px;line-height:12px;height:12px;font-size:6.90px;color:#555a69;transform:scaleX(0.935);transform-origin:0 50%;-webkit-text-stroke:0.1px #555a69;">DRAFT</div>
<div class="abs" style="left:136.4px;top:173.4px;width:863.3px;height:1px;background:#f1f6fc;"></div>
<div class="t" style="left:142.30px;top:179px;line-height:13px;height:13px;font-size:8.00px;color:#2797d4;transform:scaleX(1.017);transform-origin:0 50%;-webkit-text-stroke:0.25px #2797d4;">INV-2022/000014</div>
<div class="t" style="left:263.00px;top:179px;line-height:13px;height:13px;font-size:8.00px;color:#3a3e4f;transform:scaleX(1.011);transform-origin:0 50%;-webkit-text-stroke:0.16px #3a3e4f;">£104.99</div>
<div class="t" style="left:338.70px;top:179px;line-height:13px;height:13px;font-size:8.00px;color:#3a3e4f;transform:scaleX(1.011);transform-origin:0 50%;-webkit-text-stroke:0.16px #3a3e4f;">£13.33</div>
<div class="t" style="left:420.20px;top:179px;line-height:13px;height:13px;font-size:8.00px;color:#3a3e4f;transform:scaleX(1.063);transform-origin:0 50%;-webkit-text-stroke:0.16px #3a3e4f;">25/08/2022</div>
<div class="t" style="left:507.00px;top:179px;line-height:13px;height:13px;font-size:8.00px;color:#2797d4;transform:scaleX(0.987);transform-origin:0 50%;-webkit-text-stroke:0.25px #2797d4;">Emma Gibbons</div>
<div class="t" style="left:805.00px;top:179px;line-height:13px;height:13px;font-size:8.00px;color:#3a3e4f;transform:scaleX(1.063);transform-origin:0 50%;-webkit-text-stroke:0.16px #3a3e4f;">08/09/2022</div>
<div class="abs" style="left:891.900px;top:179.80px;width:58.7px;height:14.400px;border:1px solid #e4e8ef;border-radius:2.200px;background:#fff"></div>
<div class="t" style="left:901.80px;top:182px;line-height:12px;height:12px;font-size:6.90px;color:#555a69;transform:scaleX(0.932);transform-origin:0 50%;-webkit-text-stroke:0.1px #555a69;">CANCELLED</div>
<div class="abs" style="left:136.4px;top:208.55px;width:863.3px;height:1px;background:#f1f6fc;"></div>
<div class="t" style="left:142.30px;top:214px;line-height:13px;height:13px;font-size:8.00px;color:#2797d4;transform:scaleX(1.017);transform-origin:0 50%;-webkit-text-stroke:0.25px #2797d4;">INV-2022/000013</div>
<div class="t" style="left:263.00px;top:214px;line-height:13px;height:13px;font-size:8.00px;color:#3a3e4f;transform:scaleX(1.011);transform-origin:0 50%;-webkit-text-stroke:0.16px #3a3e4f;">£392.96</div>
<div class="t" style="left:338.70px;top:214px;line-height:13px;height:13px;font-size:8.00px;color:#3a3e4f;transform:scaleX(1.011);transform-origin:0 50%;-webkit-text-stroke:0.16px #3a3e4f;">£61.33</div>
<div class="t" style="left:420.20px;top:214px;line-height:13px;height:13px;font-size:8.00px;color:#3a3e4f;transform:scaleX(1.063);transform-origin:0 50%;-webkit-text-stroke:0.16px #3a3e4f;">25/08/2022</div>
<div class="t" style="left:507.00px;top:214px;line-height:13px;height:13px;font-size:8.00px;color:#2797d4;transform:scaleX(0.987);transform-origin:0 50%;-webkit-text-stroke:0.25px #2797d4;">Emma Gibbons</div>
<div class="t" style="left:805.00px;top:214px;line-height:13px;height:13px;font-size:8.00px;color:#3a3e4f;transform:scaleX(1.063);transform-origin:0 50%;-webkit-text-stroke:0.16px #3a3e4f;">08/09/2022</div>
<div class="abs" style="left:891.900px;top:214.90px;width:35px;height:14.400px;border:1px solid #b3de87;border-radius:2.200px;background:#fff"></div>
<div class="t" style="left:901.80px;top:218px;line-height:12px;height:12px;font-size:6.90px;color:#8bc84a;transform:scaleX(0.956);transform-origin:0 50%;-webkit-text-stroke:0.1px #8bc84a;">PAID</div>
<div class="abs" style="left:136.4px;top:243.7px;width:863.3px;height:1px;background:#f1f6fc;"></div>
<div class="t" style="left:142.30px;top:250px;line-height:13px;height:13px;font-size:8.00px;color:#2797d4;transform:scaleX(1.017);transform-origin:0 50%;-webkit-text-stroke:0.25px #2797d4;">INV-2022/000012</div>
<div class="t" style="left:263.00px;top:250px;line-height:13px;height:13px;font-size:8.00px;color:#3a3e4f;transform:scaleX(1.011);transform-origin:0 50%;-webkit-text-stroke:0.16px #3a3e4f;">£191.98</div>
<div class="t" style="left:338.70px;top:250px;line-height:13px;height:13px;font-size:8.00px;color:#3a3e4f;transform:scaleX(1.011);transform-origin:0 50%;-webkit-text-stroke:0.16px #3a3e4f;">£32.00</div>
<div class="t" style="left:420.20px;top:250px;line-height:13px;height:13px;font-size:8.00px;color:#3a3e4f;transform:scaleX(1.063);transform-origin:0 50%;-webkit-text-stroke:0.16px #3a3e4f;">25/08/2022</div>
<div class="t" style="left:507.00px;top:250px;line-height:13px;height:13px;font-size:8.00px;color:#2797d4;transform:scaleX(0.987);transform-origin:0 50%;-webkit-text-stroke:0.25px #2797d4;">Emma Gibbons</div>
<div class="t" style="left:805.00px;top:250px;line-height:13px;height:13px;font-size:8.00px;color:#3a3e4f;transform:scaleX(1.063);transform-origin:0 50%;-webkit-text-stroke:0.16px #3a3e4f;">08/09/2022</div>
<div class="abs" style="left:891.900px;top:250.30px;width:58.7px;height:14.400px;border:1px solid #e4e8ef;border-radius:2.200px;background:#fff"></div>
<div class="t" style="left:901.80px;top:253px;line-height:12px;height:12px;font-size:6.90px;color:#555a69;transform:scaleX(0.932);transform-origin:0 50%;-webkit-text-stroke:0.1px #555a69;">CANCELLED</div>
<div class="abs" style="left:136.4px;top:278.85px;width:863.3px;height:1px;background:#f1f6fc;"></div>
<div class="t" style="left:142.30px;top:285px;line-height:13px;height:13px;font-size:8.00px;color:#2797d4;transform:scaleX(1.026);transform-origin:0 50%;-webkit-text-stroke:0.25px #2797d4;">INV-2022/000011</div>
<div class="t" style="left:263.00px;top:285px;line-height:13px;height:13px;font-size:8.00px;color:#3a3e4f;transform:scaleX(1.011);transform-origin:0 50%;-webkit-text-stroke:0.16px #3a3e4f;">£89.99</div>
<div class="t" style="left:338.70px;top:285px;line-height:13px;height:13px;font-size:8.00px;color:#3a3e4f;transform:scaleX(1.011);transform-origin:0 50%;-webkit-text-stroke:0.16px #3a3e4f;">£15.00</div>
<div class="t" style="left:420.20px;top:285px;line-height:13px;height:13px;font-size:8.00px;color:#3a3e4f;transform:scaleX(1.063);transform-origin:0 50%;-webkit-text-stroke:0.16px #3a3e4f;">25/08/2022</div>
<div class="t" style="left:507.00px;top:285px;line-height:13px;height:13px;font-size:8.00px;color:#2797d4;transform:scaleX(0.977);transform-origin:0 50%;-webkit-text-stroke:0.25px #2797d4;">Jane Doe</div>
<div class="t" style="left:805.00px;top:285px;line-height:13px;height:13px;font-size:8.00px;color:#3a3e4f;transform:scaleX(1.063);transform-origin:0 50%;-webkit-text-stroke:0.16px #3a3e4f;">08/09/2022</div>
<div class="abs" style="left:891.900px;top:285.70px;width:44px;height:14.400px;border:1px solid #f79a9e;border-radius:2.200px;background:#fff"></div>
<div class="t" style="left:901.80px;top:288px;line-height:12px;height:12px;font-size:6.90px;color:#f0353d;transform:scaleX(0.959);transform-origin:0 50%;-webkit-text-stroke:0.1px #f0353d;">UNPAID</div>
<div class="abs" style="left:136.4px;top:314.0px;width:863.3px;height:1px;background:#f1f6fc;"></div>
<div class="t" style="left:142.30px;top:320px;line-height:13px;height:13px;font-size:8.00px;color:#2797d4;transform:scaleX(1.017);transform-origin:0 50%;-webkit-text-stroke:0.25px #2797d4;">INV-2022/000010</div>
<div class="t" style="left:263.00px;top:320px;line-height:13px;height:13px;font-size:8.00px;color:#3a3e4f;transform:scaleX(1.011);transform-origin:0 50%;-webkit-text-stroke:0.16px #3a3e4f;">£195.97</div>
<div class="t" style="left:338.70px;top:320px;line-height:13px;height:13px;font-size:8.00px;color:#3a3e4f;transform:scaleX(1.011);transform-origin:0 50%;-webkit-text-stroke:0.16px #3a3e4f;">£32.66</div>
<div class="t" style="left:420.20px;top:320px;line-height:13px;height:13px;font-size:8.00px;color:#3a3e4f;transform:scaleX(1.063);transform-origin:0 50%;-webkit-text-stroke:0.16px #3a3e4f;">24/08/2022</div>
<div class="t" style="left:507.00px;top:320px;line-height:13px;height:13px;font-size:8.00px;color:#2797d4;transform:scaleX(0.989);transform-origin:0 50%;-webkit-text-stroke:0.25px #2797d4;">Aaron Dobson</div>
<div class="t" style="left:805.00px;top:320px;line-height:13px;height:13px;font-size:8.00px;color:#3a3e4f;transform:scaleX(1.063);transform-origin:0 50%;-webkit-text-stroke:0.16px #3a3e4f;">07/09/2022</div>
<div class="abs" style="left:891.900px;top:320.70px;width:44px;height:14.400px;border:1px solid #f79a9e;border-radius:2.200px;background:#fff"></div>
<div class="t" style="left:901.80px;top:323px;line-height:12px;height:12px;font-size:6.90px;color:#f0353d;transform:scaleX(0.959);transform-origin:0 50%;-webkit-text-stroke:0.1px #f0353d;">UNPAID</div>
<div class="abs" style="left:136.4px;top:349.15px;width:863.3px;height:1px;background:#f1f6fc;"></div>
<div class="t" style="left:142.30px;top:355px;line-height:13px;height:13px;font-size:8.00px;color:#2797d4;transform:scaleX(1.017);transform-origin:0 50%;-webkit-text-stroke:0.25px #2797d4;">INV-2022/000009</div>
<div class="t" style="left:263.00px;top:355px;line-height:13px;height:13px;font-size:8.00px;color:#3a3e4f;transform:scaleX(1.011);transform-origin:0 50%;-webkit-text-stroke:0.16px #3a3e4f;">£139.99</div>
<div class="t" style="left:338.70px;top:355px;line-height:13px;height:13px;font-size:8.00px;color:#3a3e4f;transform:scaleX(1.011);transform-origin:0 50%;-webkit-text-stroke:0.16px #3a3e4f;">£15.00</div>
<div class="t" style="left:420.20px;top:355px;line-height:13px;height:13px;font-size:8.00px;color:#3a3e4f;transform:scaleX(1.063);transform-origin:0 50%;-webkit-text-stroke:0.16px #3a3e4f;">24/08/2022</div>
<div class="t" style="left:507.00px;top:355px;line-height:13px;height:13px;font-size:8.00px;color:#2797d4;transform:scaleX(0.989);transform-origin:0 50%;-webkit-text-stroke:0.25px #2797d4;">Aaron Dobson</div>
<div class="abs" style="left:613.100px;top:354.20px;width:68.800px;height:13.800px;background:#f8ca2e;border-radius:2.200px;box-shadow:0 0 0 .5px #c9b25a"></div>
<div class="abs" style="left:613.100px;top:354.20px;width:16px;height:13.800px;background:#0a3a9f;border-radius:2.200px 0 0 2.200px"></div>
<div class="t" style="left:615.84px;top:357px;line-height:12px;height:12px;font-size:7.00px;color:#dcc86c;transform:scaleX(0.850);transform-origin:50% 50%;">GB</div>
<div class="t" style="left:634.20px;top:355px;line-height:13px;height:13px;font-size:7.80px;color:#100e06;transform:scaleX(0.965);transform-origin:0 50%;font-weight:bold;">WA69 OXB</div>
<div class="t" style="left:805.00px;top:355px;line-height:13px;height:13px;font-size:8.00px;color:#3a3e4f;transform:scaleX(1.063);transform-origin:0 50%;-webkit-text-stroke:0.16px #3a3e4f;">16/09/2022</div>
<div class="abs" style="left:891.900px;top:355.40px;width:44px;height:14.400px;border:1px solid #f79a9e;border-radius:2.200px;background:#fff"></div>
<div class="t" style="left:901.80px;top:358px;line-height:12px;height:12px;font-size:6.90px;color:#f0353d;transform:scaleX(0.959);transform-origin:0 50%;-webkit-text-stroke:0.1px #f0353d;">UNPAID</div>
<div class="abs" style="left:136.4px;top:384.3px;width:863.3px;height:1px;background:#f1f6fc;"></div>
<div class="t" style="left:142.30px;top:390px;line-height:13px;height:13px;font-size:8.00px;color:#2797d4;transform:scaleX(1.017);transform-origin:0 50%;-webkit-text-stroke:0.25px #2797d4;">INV-2022/000008</div>
<div class="t" style="left:263.00px;top:390px;line-height:13px;height:13px;font-size:8.00px;color:#3a3e4f;transform:scaleX(1.011);transform-origin:0 50%;-webkit-text-stroke:0.16px #3a3e4f;">£89.99</div>
<div class="t" style="left:338.70px;top:390px;line-height:13px;height:13px;font-size:8.00px;color:#3a3e4f;transform:scaleX(1.011);transform-origin:0 50%;-webkit-text-stroke:0.16px #3a3e4f;">£15.00</div>
<div class="t" style="left:420.20px;top:390px;line-height:13px;height:13px;font-size:8.00px;color:#3a3e4f;transform:scaleX(1.063);transform-origin:0 50%;-webkit-text-stroke:0.16px #3a3e4f;">24/08/2022</div>
<div class="t" style="left:507.00px;top:390px;line-height:13px;height:13px;font-size:8.00px;color:#2797d4;transform:scaleX(0.989);transform-origin:0 50%;-webkit-text-stroke:0.25px #2797d4;">Aaron Dobson</div>
<div class="abs" style="left:613.100px;top:389.30px;width:68.800px;height:13.800px;background:#f8ca2e;border-radius:2.200px;box-shadow:0 0 0 .5px #c9b25a"></div>
<div class="abs" style="left:613.100px;top:389.30px;width:16px;height:13.800px;background:#0a3a9f;border-radius:2.200px 0 0 2.200px"></div>
<div class="t" style="left:615.84px;top:392px;line-height:12px;height:12px;font-size:7.00px;color:#dcc86c;transform:scaleX(0.850);transform-origin:50% 50%;">GB</div>
<div class="t" style="left:634.20px;top:390px;line-height:13px;height:13px;font-size:7.80px;color:#100e06;transform:scaleX(0.965);transform-origin:0 50%;font-weight:bold;">WA69 OXB</div>
<div class="t" style="left:805.00px;top:390px;line-height:13px;height:13px;font-size:8.00px;color:#3a3e4f;transform:scaleX(1.063);transform-origin:0 50%;-webkit-text-stroke:0.16px #3a3e4f;">07/09/2022</div>
<div class="abs" style="left:891.900px;top:390.50px;width:58.7px;height:14.400px;border:1px solid #e4e8ef;border-radius:2.200px;background:#fff"></div>
<div class="t" style="left:901.80px;top:393px;line-height:12px;height:12px;font-size:6.90px;color:#555a69;transform:scaleX(0.932);transform-origin:0 50%;-webkit-text-stroke:0.1px #555a69;">CANCELLED</div>
<div class="abs" style="left:136.4px;top:419.45px;width:863.3px;height:1px;background:#f1f6fc;"></div>
<div class="t" style="left:142.30px;top:425px;line-height:13px;height:13px;font-size:8.00px;color:#2797d4;transform:scaleX(1.017);transform-origin:0 50%;-webkit-text-stroke:0.25px #2797d4;">INV-2022/000007</div>
<div class="t" style="left:263.00px;top:425px;line-height:13px;height:13px;font-size:8.00px;color:#3a3e4f;transform:scaleX(1.011);transform-origin:0 50%;-webkit-text-stroke:0.16px #3a3e4f;">£10.00</div>
<div class="t" style="left:338.70px;top:425px;line-height:13px;height:13px;font-size:8.00px;color:#3a3e4f;transform:scaleX(1.012);transform-origin:0 50%;-webkit-text-stroke:0.16px #3a3e4f;">£0.00</div>
<div class="t" style="left:420.20px;top:425px;line-height:13px;height:13px;font-size:8.00px;color:#3a3e4f;transform:scaleX(1.063);transform-origin:0 50%;-webkit-text-stroke:0.16px #3a3e4f;">23/08/2022</div>
<div class="t" style="left:507.00px;top:425px;line-height:13px;height:13px;font-size:8.00px;color:#2797d4;transform:scaleX(0.994);transform-origin:0 50%;-webkit-text-stroke:0.25px #2797d4;">Jayden Knight</div>
<div class="abs" style="left:613.100px;top:424.50px;width:68.800px;height:13.800px;background:#f8ca2e;border-radius:2.200px;box-shadow:0 0 0 .5px #c9b25a"></div>
<div class="abs" style="left:613.100px;top:424.50px;width:16px;height:13.800px;background:#0a3a9f;border-radius:2.200px 0 0 2.200px"></div>
<div class="t" style="left:615.84px;top:427px;line-height:12px;height:12px;font-size:7.00px;color:#dcc86c;transform:scaleX(0.850);transform-origin:50% 50%;">GB</div>
<div class="t" style="left:634.20px;top:425px;line-height:13px;height:13px;font-size:7.80px;color:#100e06;transform:scaleX(0.997);transform-origin:0 50%;font-weight:bold;">GU17 DHX</div>
<div class="t" style="left:805.00px;top:425px;line-height:13px;height:13px;font-size:8.00px;color:#3a3e4f;transform:scaleX(1.063);transform-origin:0 50%;-webkit-text-stroke:0.16px #3a3e4f;">06/09/2022</div>
<div class="abs" style="left:891.900px;top:425.70px;width:35px;height:14.400px;border:1px solid #b3de87;border-radius:2.200px;background:#fff"></div>
<div class="t" style="left:901.80px;top:428px;line-height:12px;height:12px;font-size:6.90px;color:#8bc84a;transform:scaleX(0.956);transform-origin:0 50%;-webkit-text-stroke:0.1px #8bc84a;">PAID</div>
<div class="abs" style="left:136.4px;top:454.6px;width:863.3px;height:1px;background:#f1f6fc;"></div>
<div class="t" style="left:142.30px;top:460px;line-height:13px;height:13px;font-size:8.00px;color:#2797d4;transform:scaleX(1.017);transform-origin:0 50%;-webkit-text-stroke:0.25px #2797d4;">INV-2022/000006</div>
<div class="t" style="left:263.00px;top:460px;line-height:13px;height:13px;font-size:8.00px;color:#3a3e4f;transform:scaleX(0.992);transform-origin:0 50%;-webkit-text-stroke:0.16px #3a3e4f;">£4,352.50</div>
<div class="t" style="left:338.70px;top:460px;line-height:13px;height:13px;font-size:8.00px;color:#3a3e4f;transform:scaleX(1.011);transform-origin:0 50%;-webkit-text-stroke:0.16px #3a3e4f;">£520.00</div>
<div class="t" style="left:420.20px;top:460px;line-height:13px;height:13px;font-size:8.00px;color:#3a3e4f;transform:scaleX(1.063);transform-origin:0 50%;-webkit-text-stroke:0.16px #3a3e4f;">23/08/2022</div>
<div class="t" style="left:507.00px;top:460px;line-height:13px;height:13px;font-size:8.00px;color:#2797d4;transform:scaleX(0.972);transform-origin:0 50%;-webkit-text-stroke:0.25px #2797d4;">ABC Taxi</div>
<div class="abs" style="left:613.100px;top:459.50px;width:68.800px;height:13.800px;background:#f8ca2e;border-radius:2.200px;box-shadow:0 0 0 .5px #c9b25a"></div>
<div class="abs" style="left:613.100px;top:459.50px;width:16px;height:13.800px;background:#0a3a9f;border-radius:2.200px 0 0 2.200px"></div>
<div class="t" style="left:615.84px;top:462px;line-height:12px;height:12px;font-size:7.00px;color:#dcc86c;transform:scaleX(0.850);transform-origin:50% 50%;">GB</div>
<div class="t" style="left:634.20px;top:460px;line-height:13px;height:13px;font-size:7.80px;color:#100e06;transform:scaleX(0.965);transform-origin:0 50%;font-weight:bold;">YM15 WBF</div>
<div class="t" style="left:805.00px;top:460px;line-height:13px;height:13px;font-size:8.00px;color:#3a3e4f;transform:scaleX(1.063);transform-origin:0 50%;-webkit-text-stroke:0.16px #3a3e4f;">06/09/2022</div>
<div class="abs" style="left:891.900px;top:460.70px;width:35px;height:14.400px;border:1px solid #b3de87;border-radius:2.200px;background:#fff"></div>
<div class="t" style="left:901.80px;top:463px;line-height:12px;height:12px;font-size:6.90px;color:#8bc84a;transform:scaleX(0.956);transform-origin:0 50%;-webkit-text-stroke:0.1px #8bc84a;">PAID</div>
<svg class="abs" style="left:0;top:0" width="1024" height="490" viewBox="0 0 1024 490"><rect x="126.600" y="350.400" width="882.300" height="36.300" fill="none" stroke="#f4000d" stroke-width="2.800"/><path d="M649.900 88.750L220 350.500" stroke="#f4000d" stroke-width="2.700" fill="none"/><path d="M207.800 358L216 344L224.500 356.800z" fill="#f4000d"/></svg>
<div class="abs" style="left:1020.3px;top:32.7px;width:3.7px;height:460px;background:#eceff4;"></div>
<div class="abs" style="left:1020.9px;top:6px;width:2.1px;height:26.7px;background:#6b6a78;border-radius:1px 1px 0 0"></div>
<div class="abs" style="left:1020.9px;top:32.7px;width:2.1px;height:281.5px;background:#a6a7ad;border-radius:0 0 1px 1px"></div>
</div>
</body>
</html>
